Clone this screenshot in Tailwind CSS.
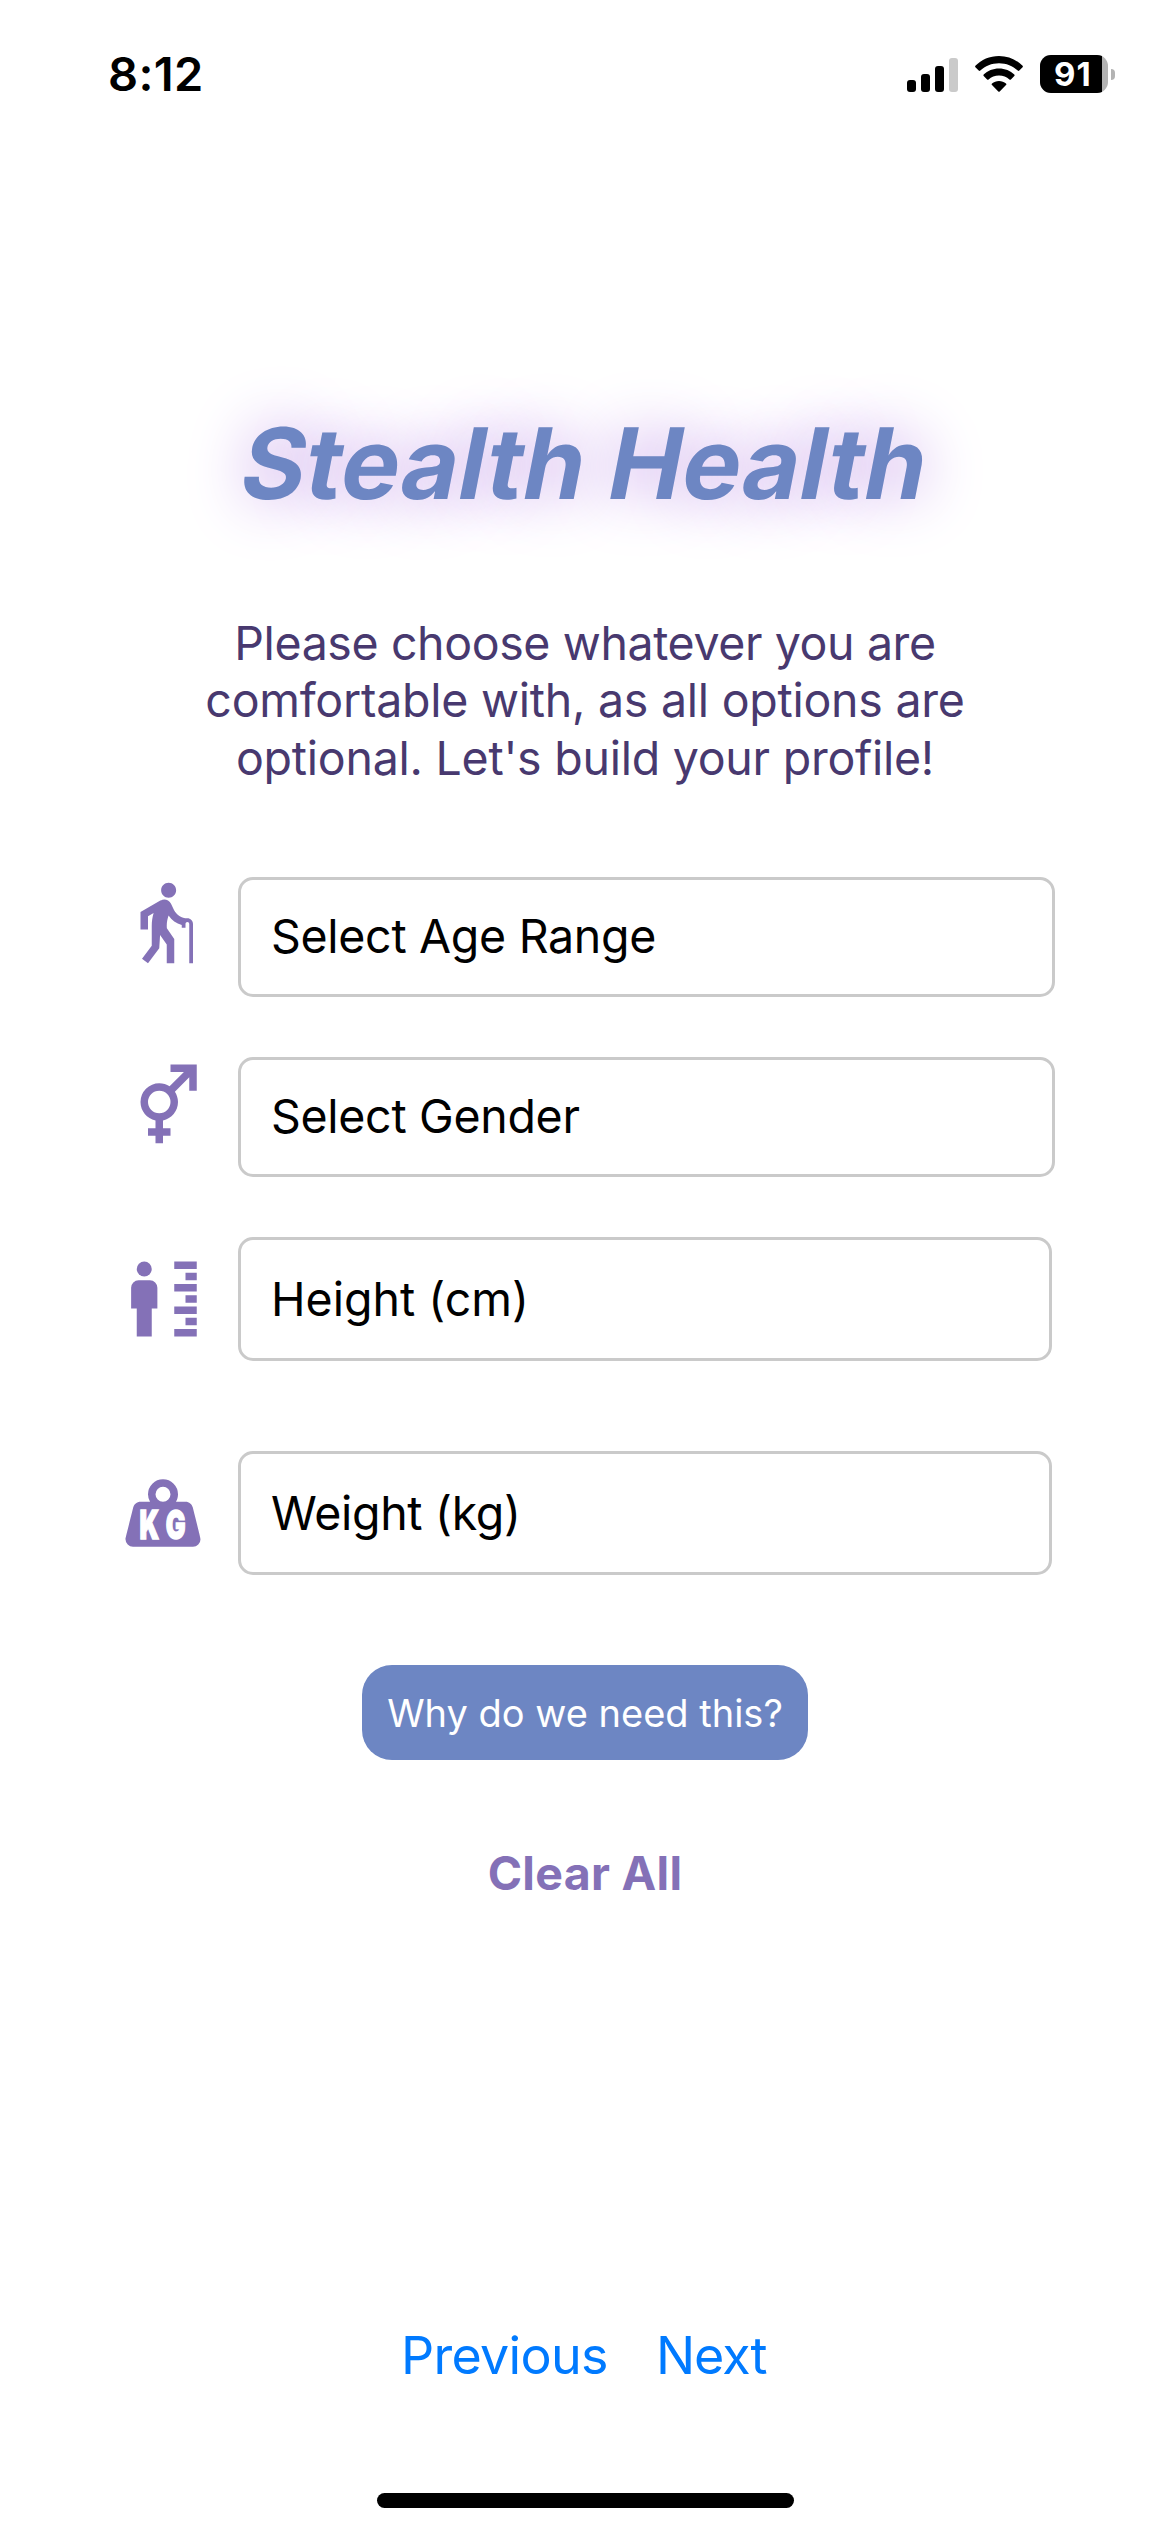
<!DOCTYPE html>
<html lang="en">
<head>
<meta charset="utf-8">
<title>Stealth Health</title>
<script src="https://cdn.jsdelivr.net/npm/@tailwindcss/browser@4"></script>
</head>
<body class="bg-white">
<div class="flex h-[2532px] w-[1170px] flex-col overflow-hidden bg-white font-['Inter',sans-serif] text-black">

  <!-- Status bar -->
  <header class="flex h-[148px] shrink-0 items-center justify-between pr-[55px] pl-[108px]">
    <div class="text-[47px] leading-[60px] font-semibold tracking-[0.35px]">8:12</div>
    <div class="flex items-center">
      <svg class="mr-[17px] h-9 w-[51px]" viewBox="0 0 51 36">
        <rect x="0" y="24" width="9" height="12" rx="3"/>
        <rect x="14" y="18" width="9" height="18" rx="3"/>
        <rect x="28" y="10" width="9" height="26" rx="3"/>
        <rect x="42" y="2" width="9" height="34" rx="3" fill="#cacaca"/>
      </svg>
      <svg class="mr-[17px] h-9 w-12" viewBox="0 0 48 36">
        <path d="M24 0C33.300 0 41.700 3.700 47.600 9.800Q48.300 10.600 47.600 11.300L44.300 14.600Q43.500 15.300 42.700 14.600C37.900 9.900 31.300 7.200 24 7.200S10.100 9.900 5.300 14.600Q4.500 15.300 3.700 14.600L.4 11.300Q-.3 10.600 .4 9.800C6.300 3.700 14.700 0 24 0Z"/>
        <path d="M24 12.500C30 12.500 35.400 14.800 39.300 18.500Q40.100 19.300 39.300 20L35.900 23.400Q35.200 24.100 34.400 23.400C31.700 20.900 28.100 19.400 24 19.400S16.300 20.900 13.600 23.400Q12.800 24.100 12.100 23.400L8.700 20Q7.900 19.300 8.700 18.500C12.600 14.800 18 12.500 24 12.500Z"/>
        <path d="M24 25C26.700 25 29.100 26 31 27.600Q31.800 28.400 31 29.100L24.700 35.500Q24 36.200 23.300 35.500L17 29.100Q16.200 28.400 17 27.600C18.900 26 21.300 25 24 25Z"/>
      </svg>
      <div class="flex items-center gap-[3px]">
        <div class="flex h-[38px] w-[68px] items-center overflow-hidden rounded-[11px] bg-[#b3b3b3]">
          <div class="flex h-full w-[62px] items-center bg-black pl-[14px] text-[33px] leading-[38px] font-bold tracking-[1px] text-white">91</div>
        </div>
        <div class="h-[11px] w-1 rounded-r-full bg-[#b3b3b3]"></div>
      </div>
    </div>
  </header>

  <main class="flex flex-col items-center">
    <h1 class="mt-[256px] h-[120px] -skew-x-[11deg] pl-[2px] text-[98.5px] leading-[120px] font-bold tracking-[0.25px] whitespace-nowrap text-[#6d86c3] [text-shadow:0_0_60px_#c49ce8]">Stealth Health</h1>

    <p class="mt-[91px] h-[172px] text-center text-[46.5px] leading-[57.3px] tracking-[-0.25px] whitespace-nowrap text-[#48396f]"><span class="tracking-[-0.39px]">Please choose whatever you are</span><br>comfortable with, as all options are<br>optional. Let's build your profile!</p>

    <form class="mt-[90px] flex w-full flex-col pl-[118px] text-[46.5px] leading-[56px] tracking-[-0.3px]">
      <div class="flex gap-[30px]">
        <svg class="size-[90px] fill-[#8471b7]" viewBox="0 0 24 24"><path d="M13.500 5.500c1.100 0 2-.9 2-2s-.9-2-2-2-2 .9-2 2 .9 2 2 2zM20 12.500V23h-1V12.500c0-.28-.22-.5-.5-.5s-.5.22-.5.5v1h-1v-.69c-1.460-.38-2.700-1.290-3.510-2.520-.31.87-.49 1.780-.49 2.710 0 .23.02.46.03.69L15 16.500V23h-2v-5l-1.780-2.540L11 19l-3 4-1.600-1.200L9 18.330V13c0-1.150.18-2.290.5-3.390L8 10.460V14H6V9.300l5.400-3.070v.01c.59-.31 1.320-.33 1.940.03.36.21.63.51.8.85l.79 1.670C15.580 10.100 16.940 11 18.500 11c.83 0 1.500.67 1.500 1.500z"/></svg>
        <div class="flex h-[120px] w-[817px] items-center rounded-[15px] border-[3px] border-[#cacaca] px-[30px] pb-[2px]">Select Age Range</div>
      </div>
      <div class="mt-[60px] flex gap-[30px]">
        <svg class="size-[90px] fill-[#8471b7]" viewBox="0 0 24 24"><path d="M17.580 4H14V2h7v7h-2V5.410l-3.830 3.830C15.690 10.030 16 11 16 12c0 2.420-1.720 4.440-4 4.900V19h2v2h-2v2h-2v-2H8v-2h2v-2.100C7.720 16.440 6 14.420 6 12a5 5 0 0 1 5-5c1 0 1.960.3 2.750.83L17.580 4M11 9a3 3 0 1 0 0 6 3 3 0 0 0 0-6z"/></svg>
        <div class="flex h-[120px] w-[817px] items-center rounded-[15px] border-[3px] border-[#cacaca] px-[30px] pb-[2px]">Select Gender</div>
      </div>
      <div class="mt-[60px] flex items-center gap-[30px]">
        <svg class="size-[90px] fill-[#8471b7]" viewBox="0 0 24 24"><circle cx="7" cy="4" r="2"/><path d="M5 22v-7.500H3.500V9a2 2 0 0 1 2-2h3a2 2 0 0 1 2 2v5.500H9V22zM15 2h6v2h-6zM18 5h3v2h-3zM15 8h6v2h-6zM18 11h3v2h-3zM15 14h6v2h-6zM18 17h3v2h-3zM15 20h6v2h-6z"/></svg>
        <div class="flex h-[124px] w-[814px] items-center rounded-[15px] border-[3px] border-[#cacaca] px-[30px] tracking-normal">Height (cm)</div>
      </div>
      <div class="mt-[90px] flex items-center gap-[30px]">
        <svg class="size-[90px] fill-[#8471b7]" viewBox="0 0 24 24">
          <path fill-rule="evenodd" d="M12 3a4 4 0 0 1 4 4c0 .73-.19 1.410-.54 2H18c.95 0 1.750.67 1.950 1.560C21.960 18.570 22 18.780 22 19a2 2 0 0 1-2 2H4a2 2 0 0 1-2-2c0-.22.04-.43 2.050-8.440C4.250 9.670 5.050 9 6 9h2.540A3.900 3.900 0 0 1 8 7a4 4 0 0 1 4-4m0 2a2 2 0 1 0 0 4 2 2 0 0 0 0-4z"/>
          <text class="fill-white stroke-white font-black" stroke-width=".4" font-size="10.600" transform="translate(5.700 18.850) scale(.65 1)">K</text>
          <text class="fill-white stroke-white font-black" stroke-width=".4" font-size="10.600" transform="translate(12.700 18.850) scale(.66 1)">G</text>
        </svg>
        <div class="flex h-[124px] w-[814px] items-center rounded-[15px] border-[3px] border-[#cacaca] px-[30px]">Weight (kg)</div>
      </div>
    </form>

    <button class="mt-[90px] flex h-[95px] w-[446px] items-center justify-center rounded-[30px] bg-[#6d86c3] text-[38px] leading-[48px] whitespace-nowrap text-white">Why do we need this?</button>
    <button class="mt-[83px] h-[60px] text-[46.5px] leading-[60px] font-bold tracking-[0.29px] text-[#8471b7]">Clear All</button>
  </main>

  <nav class="mt-[423px] flex h-[60px] pl-[401px] text-[52px] leading-[60px] text-[#007aff]">
    <a class="w-[255px] tracking-[-0.71px]">Previous</a>
    <a class="tracking-[-1.1px]">Next</a>
  </nav>

  <!-- Home indicator -->
  <div class="mt-[107px] h-[15px] w-[417px] self-center rounded-full bg-black"></div>
</div>
</body>
</html>
